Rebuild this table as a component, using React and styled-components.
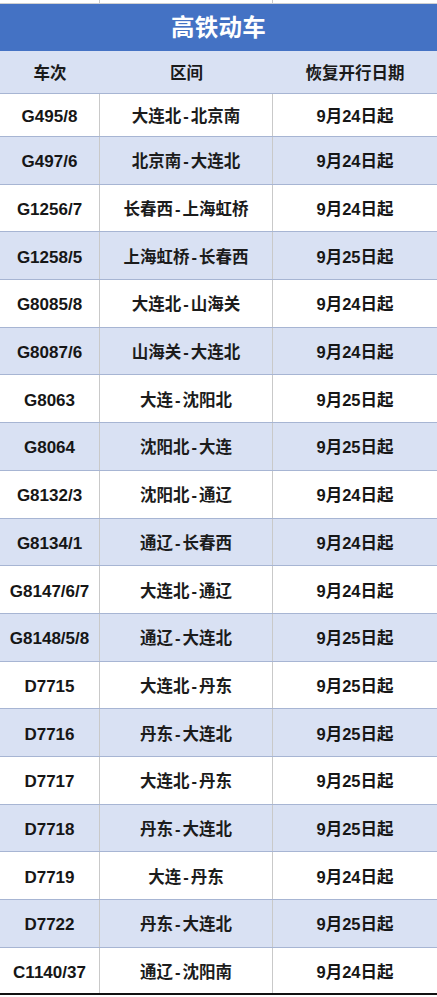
import React from 'react';
import styled, { createGlobalStyle } from 'styled-components';

const GlobalStyle = createGlobalStyle`
  html, body {
    margin: 0;
    padding: 0;
    background: #ffffff;
  }
  body {
    font-family: "Liberation Sans", "Noto Sans CJK SC", sans-serif;
    color: #111;
  }
`;

const rows = [
  ['G495/8', '大连北-北京南', '9月24日起'],
  ['G497/6', '北京南-大连北', '9月24日起'],
  ['G1256/7', '长春西-上海虹桥', '9月24日起'],
  ['G1258/5', '上海虹桥-长春西', '9月25日起'],
  ['G8085/8', '大连北-山海关', '9月24日起'],
  ['G8087/6', '山海关-大连北', '9月24日起'],
  ['G8063', '大连-沈阳北', '9月25日起'],
  ['G8064', '沈阳北-大连', '9月25日起'],
  ['G8132/3', '沈阳北-通辽', '9月24日起'],
  ['G8134/1', '通辽-长春西', '9月24日起'],
  ['G8147/6/7', '大连北-通辽', '9月24日起'],
  ['G8148/5/8', '通辽-大连北', '9月25日起'],
  ['D7715', '大连北-丹东', '9月25日起'],
  ['D7716', '丹东-大连北', '9月25日起'],
  ['D7717', '大连北-丹东', '9月25日起'],
  ['D7718', '丹东-大连北', '9月25日起'],
  ['D7719', '大连-丹东', '9月24日起'],
  ['D7722', '丹东-大连北', '9月25日起'],
  ['C1140/37', '通辽-沈阳南', '9月24日起'],
];

const Page = styled.div`
  width: 437px;
  height: 997px;
  overflow: hidden;
  display: flex;
  flex-direction: column;
`;

const Row = styled.div`
  display: grid;
  grid-template-columns: 100px 173px 1fr;
  height: ${p => p.$h}px;
  background: ${p => (p.$shaded ? '#d9e1f3' : '#ffffff')};
  border-bottom: ${p => (p.$last ? '2px solid #111' : '1px solid #a7b5d3')};
  box-sizing: border-box;
  flex: none;
`;

const Cell = styled.div`
  display: flex;
  align-items: center;
  justify-content: center;
  font-size: ${p => p.$size || 16.5}px;
  line-height: 20px;
  font-weight: 700;
  color: #161616;
  border-right: ${p => (p.$divider ? '1px solid #c9c9c9' : 'none')};
  white-space: nowrap;
  padding-top: ${p => p.$drop || 1}px;
`;

const RouteText = styled.span`
  font-weight: 600;
  color: #1c1c1c;
`;

const Dash = styled.span`
  margin: 0 2px;
`;

const Title = styled.div`
  height: 47px;
  background: #4472c4;
  color: #ffffff;
  font-size: 23.5px;
  font-weight: 700;
  display: flex;
  align-items: center;
  justify-content: center;
  letter-spacing: 0.3px;
  padding-bottom: 3px;
  box-sizing: border-box;
  flex: none;
`;

const HeadRow = styled.div`
  display: grid;
  grid-template-columns: 100px 173px 1fr;
  height: 43px;
  background: #d9e1f3;
  border-bottom: 1px solid #a7b5d3;
  box-sizing: border-box;
  flex: none;
`;

const HeadCell = styled.div`
  display: flex;
  align-items: center;
  justify-content: center;
  font-size: 16.5px;
  font-weight: 700;
  color: #1a1a1a;
`;

function Route({ text }) {
  const [from, to] = text.split('-');
  return (
    <RouteText>
      {from}
      <Dash>-</Dash>
      {to}
    </RouteText>
  );
}

export default function App() {
  return (
    <>
      <GlobalStyle />
      <Page>
        <Row $h={4} style={{ borderBottom: '1px solid #d0d0d0' }}>
          <Cell $divider />
          <Cell $divider />
          <Cell />
        </Row>
        <Title>高铁动车</Title>
        <HeadRow>
          <HeadCell>车次</HeadCell>
          <HeadCell>区间</HeadCell>
          <HeadCell>恢复开行日期</HeadCell>
        </HeadRow>
        {rows.map(([code, route, date], i) => (
          <Row
            key={code}
            $h={i === 0 ? 43 : 47.7}
            $shaded={i % 2 === 1}
            $last={i === rows.length - 1}
          >
            <Cell $divider $size={17} $drop={4}>{code}</Cell>
            <Cell $divider $drop={2}>
              <Route text={route} />
            </Cell>
            <Cell $drop={2}>{date}</Cell>
          </Row>
        ))}
      </Page>
    </>
  );
}
